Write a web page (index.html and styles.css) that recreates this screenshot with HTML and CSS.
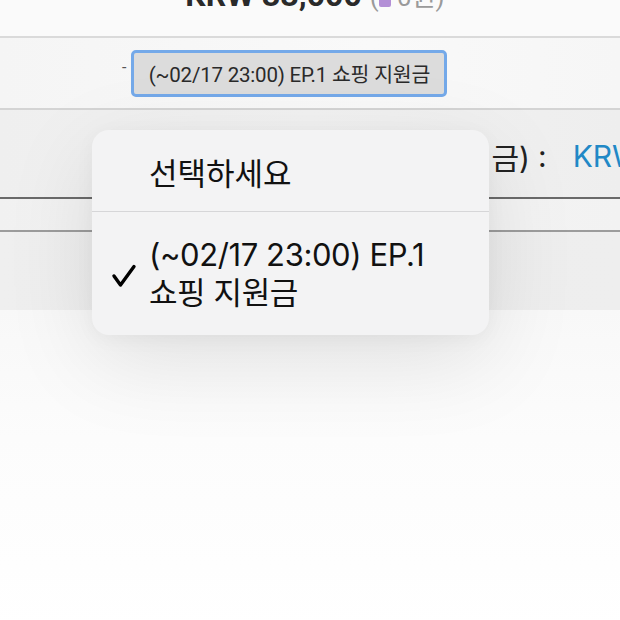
FILE: index.html
```html
<!DOCTYPE html>
<html lang="ko">
<head>
<meta charset="utf-8">
<link rel="stylesheet" href="styles.css">
</head>
<body>
<div class="page">
  <div class="title-row">
    <h1 class="title"><span class="amount">KRW 33,000</span> <span class="sub">(<span class="pbadge"></span> 0원)</span></h1>
  </div>
  <div class="select-row">
    <span class="dash">-</span>
    <div class="select-box">(~02/17 23:00) EP.1 쇼핑 지원금</div>
  </div>
  <div class="price-row">
    <span class="label">쇼핑 지원금(지원금)</span><span class="colon">:</span><span class="value">KRW 10,000</span>
  </div>
  <div class="spacer-row"></div>
  <div class="grey-band"></div>
  <div class="blank"></div>

  <div class="menu">
    <div class="menu-item first">선택하세요</div>
    <div class="menu-item second">
      <svg class="check" width="26" height="24" viewBox="0 0 26 24"><path d="M3 12 L9.5 21 L23 2.5" fill="none" stroke="#000" stroke-width="3.4" stroke-linecap="round" stroke-linejoin="round"/></svg>
      <span class="item-text">(~02/17 23:00) EP.1<br>쇼핑 지원금</span>
    </div>
  </div>
</div>
</body>
</html>
```
FILE: styles.css
```css
html, body {
  margin: 0;
  padding: 0;
}
body {
  width: 620px;
  height: 620px;
  overflow: hidden;
  background: #ffffff;
  font-family: Inter, "Noto Sans CJK KR", sans-serif;
}
.page {
  position: relative;
  width: 620px;
  height: 620px;
  overflow: hidden;
}
.title-row {
  height: 36px;
  background: #fafafa;
  border-bottom: 2px solid #dadada;
  overflow: hidden;
  display: flex;
  justify-content: center;
}
.title {
  margin: -20px 0 0 10px;
  font-size: 32px;
  line-height: 30px;
  white-space: nowrap;
  font-family: Roboto, "Noto Sans CJK KR", sans-serif;
}
.amount {
  font-weight: 700;
  color: #2a2a2a;
}
.sub {
  font-weight: 400;
  color: #9a9a9a;
  font-size: 26px;
}
.pbadge {
  display: inline-block;
  width: 12px;
  height: 14px;
  background: #b38fd6;
  border-radius: 2px;
  vertical-align: -1px;
}
.select-row {
  background: linear-gradient(90deg, #f5f5f5, #f9f9f9 60%, #f6f6f6);
  border-bottom: 2px solid #d4d4d4;
  display: flex;
  align-items: center;
  padding-left: 122px;
  box-sizing: border-box;
  height: 72px;
}
.dash {
  font-family: Roboto, sans-serif;
  font-size: 16px;
  color: #555;
  margin-right: 5px;
  margin-top: -12px;
}
.select-box {
  width: 316px;
  height: 47px;
  box-sizing: border-box;
  border: 3px solid #74a9e9;
  border-radius: 5px;
  background: #dcdcdc;
  font-family: Roboto, "Noto Sans CJK KR", sans-serif;
  font-size: 20.5px;
  color: #2a2a2a;
  display: flex;
  align-items: center;
  justify-content: center;
  margin-top: 0px;
  white-space: nowrap;
  letter-spacing: -0.2px;
}
.price-row {
  background: linear-gradient(90deg, #efefef, #f2f2f2 50%, #eeeeee);
  border-bottom: 2px solid #6a6a6a;
  display: flex;
  align-items: center;
  white-space: nowrap;
  font-size: 30px;
  color: #222;
  padding-top: 4px;
  box-sizing: border-box;
  height: 89px;
}
.label {
  width: 530px;
  text-align: right;
  flex: none;
  font-family: Inter, "Noto Sans CJK KR", sans-serif;
}
.colon {
  margin-left: 8px;
  flex: none;
}
.value {
  margin-left: 26px;
  color: #2188c6;
  flex: none;
}
.spacer-row {
  height: 31px;
  background: linear-gradient(90deg, #f1f1f1, #f5f5f5 50%, #f2f2f2);
  border-bottom: 2px solid #9c9c9c;
}
.grey-band {
  height: 78px;
  background: linear-gradient(90deg, #efefef, #ededed 50%, #eeeeee);
}
.blank {
  height: 320px;
  background: linear-gradient(180deg, #f8f8f8 0%, #fcfcfc 40%, #ffffff 100%);
}
.menu {
  position: absolute;
  left: 92px;
  top: 130px;
  width: 397px;
  height: 205px;
  border-radius: 17px;
  background: #f3f3f4;
  box-shadow: 0 24px 90px rgba(0, 0, 0, 0.10), 0 4px 20px rgba(0, 0, 0, 0.04);
  overflow: hidden;
  font-family: Inter, "Noto Sans CJK KR", sans-serif;
  color: #111;
}
.menu-item {
  display: flex;
  align-items: center;
  box-sizing: border-box;
}
.menu-item.first {
  height: 82px;
  padding-left: 57px;
  font-size: 31px;
  border-bottom: 1.5px solid #d6d6d8;
  padding-top: 2px;
}
.menu-item.second {
  height: 123px;
  padding-left: 19px;
  font-size: 31px;
  line-height: 38px;
}
.check {
  flex: none;
  margin-right: 12px;
  margin-top: 4px;
}
.item-text {
  letter-spacing: -0.4px;
}
```
